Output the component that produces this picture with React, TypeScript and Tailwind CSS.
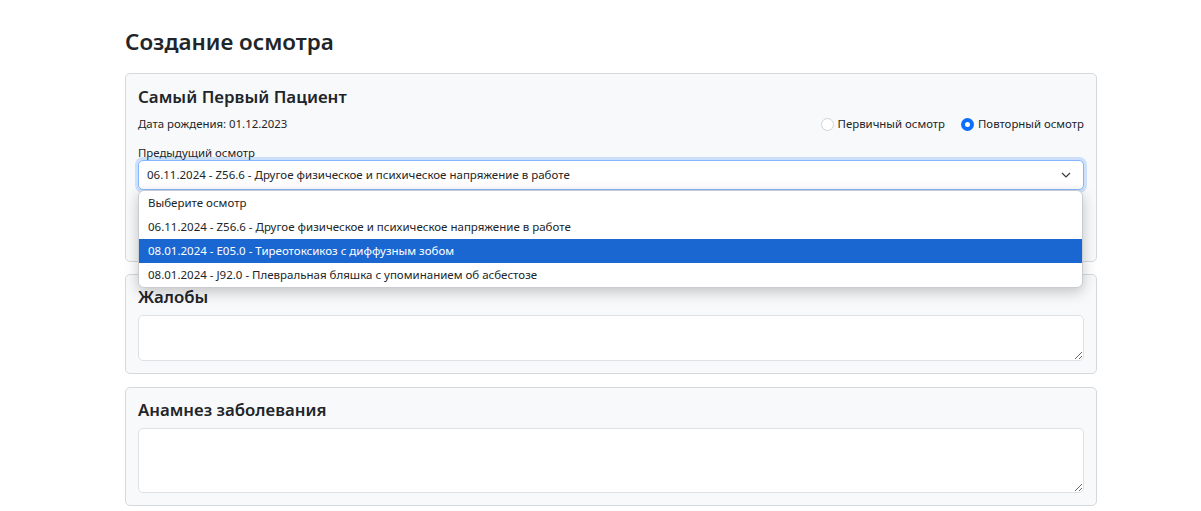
import { useState } from 'react';

const visits = [
  '06.11.2024 - Z56.6 - Другое физическое и психическое напряжение в работе',
  '08.01.2024 - E05.0 - Тиреотоксикоз с диффузным зобом',
  '08.01.2024 - J92.0 - Плевральная бляшка с упоминанием об асбестозе',
];

const Radio = ({ checked, label }: { checked: boolean; label: string }) => (
  <label className="flex items-center gap-[4px]">
    {checked ? (
      <span className="w-[13px] h-[13px] rounded-full bg-[#0d6efd] flex items-center justify-center">
        <span className="w-[5px] h-[5px] rounded-full bg-white" />
      </span>
    ) : (
      <span className="w-[13px] h-[13px] rounded-full bg-white border border-[#d0d4d8]" />
    )}
    <span>{label}</span>
  </label>
);

export default function App() {
  const [kind] = useState<'first' | 'repeat'>('repeat');
  const [selected] = useState(0);
  const [hover] = useState(1);

  return (
    <div className="min-h-[511px] bg-white text-[#212529] font-['Segoe_UI','Noto_Sans',sans-serif] pt-[27px]">
      <div className="ml-[125px] w-[972px]">
        <h1 className="text-[22.4px] leading-[29px] font-semibold mb-[17px]">Создание осмотра</h1>

        <div className="border border-[#d6d9dc] rounded-[5px] bg-[#f8f9fa] px-[12px] pt-[12px] pb-[12px]">
          <h2 className="text-[16.9px] leading-[22px] font-semibold">Самый Первый Пациент</h2>
          <div className="flex items-center justify-between text-[11.4px] leading-[18px] mt-[7px]">
            <span>Дата рождения: 01.12.2023</span>
            <div className="flex items-center gap-[16px]">
              <Radio checked={kind === 'first'} label="Первичный осмотр" />
              <Radio checked={kind === 'repeat'} label="Повторный осмотр" />
            </div>
          </div>
          <div className="text-[11.4px] leading-[14px] mt-[13px]">Предыдущий осмотр</div>
          <div className="relative">
            <div className="h-[30px] bg-white border border-[#86b7fe] rounded-[5px] shadow-[0_0_0_3px_rgba(13,110,253,0.18)] flex items-center justify-between pl-[8px] pr-[12px] text-[11.5px]">
              <span>{visits[selected]}</span>
              <svg width="10" height="6" viewBox="0 0 10 6" fill="none" stroke="#343a40" strokeWidth="1.2">
                <path d="M1 1l4 4 4-4" />
              </svg>
            </div>
            <div className="absolute left-0 right-[1px] top-[30px] z-10 bg-white border border-[#c9cdd1] rounded-[6px] shadow-[0_4px_14px_rgba(0,0,0,0.22)] overflow-hidden text-[11.5px]">
              <div className="h-[24px] flex items-center px-[9px]">Выберите осмотр</div>
              {visits.map((v, i) => (
                <div
                  key={v}
                  className={`h-[24px] flex items-center px-[9px] ${i === hover ? 'bg-[#1a67d2] text-white' : ''}`}
                >
                  {v}
                </div>
              ))}
            </div>
          </div>
          {/* row hidden under the open list */}
          <div className="flex items-center h-[18px] mt-[14px]">
            <span className="w-[13px] h-[13px] rounded-[3px] bg-white border border-[#d0d4d8]" />
          </div>
          <div className="h-[27px]" />
        </div>

        <div className="border border-[#d6d9dc] rounded-[5px] bg-[#f8f9fa] px-[12px] pt-[11px] pb-[12px] mt-[12px]">
          <h2 className="text-[16.8px] leading-[22px] font-semibold">Жалобы</h2>
          <textarea className="block w-full h-[46px] mt-[7px] bg-white border border-[#dee2e6] rounded-[5px]" />
        </div>

        <div className="border border-[#d6d9dc] rounded-[5px] bg-[#f8f9fa] px-[12px] pt-[11px] pb-[12px] mt-[13px]">
          <h2 className="text-[16.8px] leading-[22px] font-semibold">Анамнез заболевания</h2>
          <textarea className="block w-full h-[65px] mt-[7px] bg-white border border-[#dee2e6] rounded-[5px]" />
        </div>
      </div>
    </div>
  );
}
